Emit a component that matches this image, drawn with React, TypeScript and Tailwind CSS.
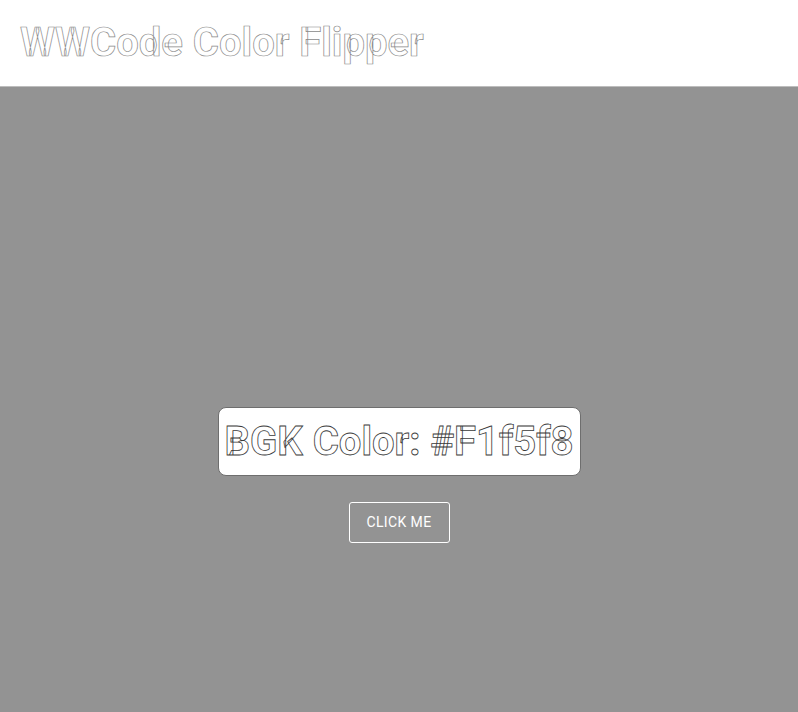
export default function App() {
  return (
    <div className="min-h-screen bg-[#939393] font-['Roboto',sans-serif] antialiased">
      <header className="h-[87px] bg-white flex items-center px-5 border-b border-[#bdbdbd]">
        <h1 className="text-[40px] font-bold text-white [-webkit-text-stroke:0.7px_#8a8a8a] leading-none">WWCode Color Flipper</h1>
      </header>
      <main className="flex flex-col items-center pt-[320px]">
        <div className="bg-white rounded-lg border border-[#6e6e6e] w-[363px] h-[69px] flex items-center justify-center">
          <h2 className="text-[40px] font-bold text-white [-webkit-text-stroke:0.8px_#3a3a3a] leading-none">BGK Color: #F1f5f8</h2>
        </div>
        <button className="mt-[26px] w-[101px] h-[41px] border border-white rounded-[3px] text-white text-[14px] tracking-[0.4px]">CLICK ME</button>
      </main>
    </div>
  );
}
